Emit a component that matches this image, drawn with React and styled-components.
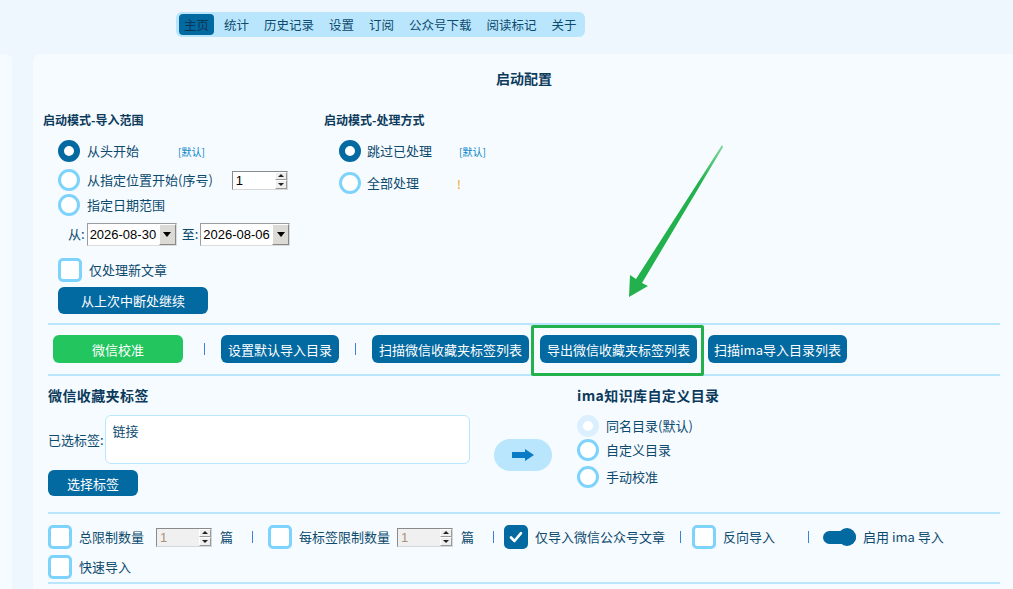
import React from "react";
import styled, { createGlobalStyle, css } from "styled-components";

const colors = {
    page: "#eef6fe",
    panel: "#f6fbff",
    text: "#0c4a6e",
    heading: "#0b3a5c",
    primary: "#0369a1",
    light: "#7dd3fc",
    line: "#bae6fd",
    green: "#22c55e",
    mark: "#22b14c",
    link: "#0284c7",
    sep: "#3b82d6",
};

const GlobalStyle = createGlobalStyle`
    html, body {
        margin: 0;
        padding: 0;
    }
    body {
        background: ${colors.page};
        font-family: "Noto Sans CJK SC", "Noto Sans", sans-serif;
        font-size: 13px;
        color: ${colors.text};
        overflow: hidden;
    }
`;

// shared left offset for items laid out in a row
const spaced = css`
    margin-left: ${(p) => p.$ml || 0}px;
`;

const Header = styled.header`
    height: 54px;
    box-sizing: border-box;
    padding: 12px 0 0 176px;
`;

const NavPill = styled.nav`
    display: inline-flex;
    align-items: center;
    gap: 5px;
    height: 25px;
    box-sizing: border-box;
    padding: 0 3px;
    background: ${colors.line};
    border-radius: 6px;
`;

const NavItem = styled.span`
    height: 21px;
    line-height: 21px;
    padding: 0 5px;
    border-radius: 4px;
    font-size: 12.5px;
    color: ${(p) => (p.$active ? "#0a3552" : colors.text)};
    background: ${(p) => (p.$active ? colors.primary : "transparent")};
`;

const Main = styled.div`
    display: flex;
    gap: 21px;
    min-height: calc(100vh - 54px);
`;

const SideBar = styled.aside`
    width: 12px;
    flex: none;
    background: ${colors.panel};
    border-radius: 0 6px 0 0;
`;

const Panel = styled.section`
    flex: 1;
    position: relative;
    background: ${colors.panel};
    border-radius: 8px 0 0 0;
    padding: 16px 13px 20px 15px;
`;

const Title = styled.h1`
    margin: 0;
    text-align: center;
    font-size: 14px;
    line-height: 17px;
    font-weight: 700;
    color: ${colors.heading};
`;

const ModeGrid = styled.div`
    display: flex;
    margin: 24px 0 0 -5px;
`;

const ModeColumn = styled.div`
    width: ${(p) => p.$w}px;
`;

const Heading = styled.div`
    font-size: ${(p) => p.$size || 12}px;
    line-height: 18px;
    font-weight: 700;
    color: ${colors.heading};
    letter-spacing: ${(p) => (p.$size ? "0.4px" : "0")};
    white-space: nowrap;
`;

const Row = styled.div`
    display: flex;
    align-items: center;
    height: 24px;
    margin-top: ${(p) => p.$mt || 0}px;
    padding-left: ${(p) => p.$indent || 0}px;
`;

const ButtonRow = styled.div`
    display: flex;
    padding: 5px 0 0 15px;
`;

const Radio = styled.span`
    ${spaced};
    flex: none;
    width: 22px;
    height: 22px;
    box-sizing: border-box;
    border-radius: 50%;
    background: #fff;
    border: ${(p) =>
        p.$checked
            ? `6px solid ${colors.primary}`
            : p.$disabled
            ? "6px solid #dcefff"
            : `3px solid ${colors.light}`};
`;

const CheckBox = styled.span`
    ${spaced};
    flex: none;
    width: 24px;
    height: 24px;
    box-sizing: border-box;
    border-radius: 5px;
    border: 3px solid ${(p) => (p.$checked ? colors.primary : colors.light)};
    background: ${(p) => (p.$checked ? colors.primary : "#fff")};
    display: flex;
    align-items: center;
    justify-content: center;
`;

const Label = styled.span`
    ${spaced};
    min-width: ${(p) => p.$w || 0}px;
    line-height: 24px;
    white-space: nowrap;
    color: ${colors.text};
`;

const Tag = styled.span`
    font-size: 10px;
    color: ${colors.link};
`;

const Warn = styled.span`
    font-size: 12px;
    color: #f59e0b;
`;

const SpinBox = styled.div`
    ${spaced};
    display: flex;
    width: 56px;
    height: 19px;
    box-sizing: border-box;
    border: 1px solid #8a8a8a;
    border-right-color: #d6d6d6;
    border-bottom-color: #d6d6d6;
    background: ${(p) => (p.$disabled ? "#f0f0f0" : "#fff")};
`;

const SpinValue = styled.span`
    flex: 1;
    padding-left: 3px;
    font: 13px/17px "Liberation Sans", sans-serif;
    color: ${(p) => (p.$disabled ? "#a8927a" : "#000")};
`;

const SpinArrows = styled.span`
    display: flex;
    flex-direction: column;
    width: 12px;
`;

const SpinBtn = styled.span`
    flex: 1;
    display: flex;
    align-items: center;
    justify-content: center;
    background: #efefef;
    border: 1px solid #fff;
    border-right-color: #9a9a9a;
    border-bottom-color: #9a9a9a;

    &::after {
        content: "";
        border-left: 3px solid transparent;
        border-right: 3px solid transparent;
        ${(p) =>
            p.$down
                ? "border-top: 3px solid #222;"
                : "border-bottom: 3px solid #222;"}
    }
`;

const DateSelect = styled.div`
    ${spaced};
    display: flex;
    width: ${(p) => p.$w}px;
    height: 23px;
    box-sizing: border-box;
    border: 1px solid #9c9c9c;
    border-right-color: #dcdcdc;
    border-bottom-color: #dcdcdc;
    background: #fff;
`;

const DateText = styled.span`
    flex: 1;
    padding-left: 2px;
    font: 13px/21px "Liberation Sans", sans-serif;
    color: #000;
`;

const DropBtn = styled.span`
    width: 15px;
    display: flex;
    align-items: center;
    justify-content: center;
    background: #dcdad5;
    border: 1px solid #fff;
    border-right-color: #888;
    border-bottom-color: #888;

    &::after {
        content: "";
        border-left: 4px solid transparent;
        border-right: 4px solid transparent;
        border-top: 5px solid #000;
    }
`;

const Button = styled.button`
    ${spaced};
    flex: none;
    height: ${(p) => p.$h || 28}px;
    width: ${(p) => (p.$w ? `${p.$w}px` : "auto")};
    padding: 0 ${(p) => p.$pad ?? 7}px;
    margin-top: ${(p) => p.$mt || 0}px;
    border: none;
    border-radius: 6px;
    background: ${(p) => (p.$green ? colors.green : colors.primary)};
    color: #fff;
    font-family: inherit;
    font-size: 13px;
    white-space: nowrap;
    cursor: pointer;
`;

const Divider = styled.div`
    height: 2px;
    background: ${colors.line};
    margin-top: ${(p) => p.$mt || 0}px;
`;

const ToolRow = styled.div`
    display: flex;
    align-items: center;
    padding: 10px 0 11px 5px;
`;

const Sep = styled.span`
    ${spaced};
    flex: none;
    width: 1px;
    height: 12px;
    background: ${colors.sep};
`;

const TagSection = styled.div`
    display: flex;
    padding: 10px 0 16px;
`;

const TagColumn = styled.div`
    width: 422px;
`;

const FieldRow = styled.div`
    display: flex;
    align-items: center;
    gap: 1px;
    margin-top: 11px;
`;

const TagBox = styled.div`
    width: 366px;
    height: 49px;
    box-sizing: border-box;
    background: #fff;
    border: 1px solid ${colors.line};
    border-radius: 6px;
    padding: 6px 7px;
    line-height: 17px;
`;

const ArrowButton = styled.button`
    flex: none;
    align-self: flex-start;
    width: 58px;
    height: 32px;
    margin: 53px 0 0 24px;
    border: none;
    border-radius: 16px;
    background: ${colors.line};
    display: flex;
    align-items: center;
    justify-content: center;
    cursor: pointer;
`;

const DirColumn = styled.div`
    margin-left: 25px;
`;

const OptionsSection = styled.div`
    padding-top: 11px;
`;

const Unit = styled.span`
    ${spaced};
    line-height: 24px;
`;

const Toggle = styled.span`
    ${spaced};
    position: relative;
    flex: none;
    width: 33px;
    height: 13px;
    border-radius: 7px;
    background: ${colors.primary};

    &::after {
        content: "";
        position: absolute;
        right: 0;
        top: -2.5px;
        width: 18px;
        height: 18px;
        border-radius: 50%;
        background: ${colors.primary};
    }
`;

// annotation drawn over the page
const Highlight = styled.div`
    position: absolute;
    left: 498px;
    top: 271px;
    width: 173px;
    height: 51px;
    box-sizing: border-box;
    border: 3px solid ${colors.mark};
    border-radius: 2px;
    pointer-events: none;
`;

const PointerArrow = styled.svg`
    position: absolute;
    left: 587px;
    top: 86px;
    pointer-events: none;
`;

const navItems = ["主页", "统计", "历史记录", "设置", "订阅", "公众号下载", "阅读标记", "关于"];

function Spin({ ml, disabled }) {
    return (
        <SpinBox $ml={ml} $disabled={disabled}>
            <SpinValue $disabled={disabled}>1</SpinValue>
            <SpinArrows>
                <SpinBtn />
                <SpinBtn $down />
            </SpinArrows>
        </SpinBox>
    );
}

function Check({ ml }) {
    return (
        <CheckBox $checked $ml={ml}>
            <svg width="14" height="14" viewBox="0 0 14 14">
                <polyline points="2,7.5 5.5,11 12,3.2" fill="none" stroke="#fff" strokeWidth="2.6" strokeLinecap="round" strokeLinejoin="round" />
            </svg>
        </CheckBox>
    );
}

function App() {
    return (
        <>
            <GlobalStyle />
            <Header>
                <NavPill>
                    {navItems.map((item, i) => (
                        <NavItem key={item} $active={i === 0}>{item}</NavItem>
                    ))}
                </NavPill>
            </Header>
            <Main>
                <SideBar />
                <Panel>
                    <Title>启动配置</Title>

                    <ModeGrid>
                        <ModeColumn $w={281}>
                            <Heading>启动模式-导入范围</Heading>
                            <Row $mt={10} $indent={15}>
                                <Radio $checked />
                                <Label $ml={7} $w={91}>从头开始</Label>
                                <Tag>[默认]</Tag>
                            </Row>
                            <Row $mt={5} $indent={15}>
                                <Radio />
                                <Label $ml={7}>从指定位置开始(序号)</Label>
                                <Spin ml={19} />
                            </Row>
                            <Row $mt={1} $indent={15}>
                                <Radio />
                                <Label $ml={7}>指定日期范围</Label>
                            </Row>
                            <Row $mt={5} $indent={25}>
                                <Label>从:</Label>
                                <DateSelect $ml={2} $w={90}>
                                    <DateText>2026-08-30</DateText>
                                    <DropBtn />
                                </DateSelect>
                                <Label $ml={5}>至:</Label>
                                <DateSelect $ml={2} $w={90}>
                                    <DateText>2026-08-06</DateText>
                                    <DropBtn />
                                </DateSelect>
                            </Row>
                            <Row $mt={12} $indent={15}>
                                <CheckBox />
                                <Label $ml={7}>仅处理新文章</Label>
                            </Row>
                            <ButtonRow>
                                <Button $w={150} $h={27}>从上次中断处继续</Button>
                            </ButtonRow>
                        </ModeColumn>
                        <ModeColumn $w={400}>
                            <Heading>启动模式-处理方式</Heading>
                            <Row $mt={10} $indent={15}>
                                <Radio $checked />
                                <Label $ml={6} $w={92}>跳过已处理</Label>
                                <Tag>[默认]</Tag>
                            </Row>
                            <Row $mt={8} $indent={15}>
                                <Radio />
                                <Label $ml={6} $w={90}>全部处理</Label>
                                <Warn>!</Warn>
                            </Row>
                        </ModeColumn>
                    </ModeGrid>

                    <Divider $mt={9} />
                    <ToolRow>
                        <Button $green $w={130}>微信校准</Button>
                        <Sep $ml={21} />
                        <Button $ml={16}>设置默认导入目录</Button>
                        <Sep $ml={16} />
                        <Button $ml={16}>扫描微信收藏夹标签列表</Button>
                        <Button $ml={11}>导出微信收藏夹标签列表</Button>
                        <Button $ml={11} $pad={6}>扫描ima导入目录列表</Button>
                    </ToolRow>
                    <Divider />

                    <TagSection>
                        <TagColumn>
                            <Heading $size={14}>微信收藏夹标签</Heading>
                            <FieldRow>
                                <Label>已选标签:</Label>
                                <TagBox>链接</TagBox>
                            </FieldRow>
                            <Button $w={90} $h={26} $mt={6}>选择标签</Button>
                        </TagColumn>
                        <ArrowButton aria-label="apply">
                            <svg width="22" height="12" viewBox="0 0 22 12">
                                <polygon points="0,3 13,3 13,0 22,6 13,12 13,9 0,9" fill="#0a7cc4" />
                            </svg>
                        </ArrowButton>
                        <DirColumn>
                            <Heading $size={14}>ima知识库自定义目录</Heading>
                            <Row $mt={10}>
                                <Radio $disabled />
                                <Label $ml={7}>同名目录(默认)</Label>
                            </Row>
                            <Row>
                                <Radio />
                                <Label $ml={7}>自定义目录</Label>
                            </Row>
                            <Row $mt={3}>
                                <Radio />
                                <Label $ml={7}>手动校准</Label>
                            </Row>
                        </DirColumn>
                    </TagSection>
                    <Divider />

                    <OptionsSection>
                        <Row>
                            <CheckBox />
                            <Label $ml={7}>总限制数量</Label>
                            <Spin ml={12} disabled />
                            <Unit $ml={8}>篇</Unit>
                            <Sep $ml={19} />
                            <CheckBox $ml={15} />
                            <Label $ml={7}>每标签限制数量</Label>
                            <Spin ml={7} disabled />
                            <Unit $ml={8}>篇</Unit>
                            <Sep $ml={19} />
                            <Check ml={10} />
                            <Label $ml={7}>仅导入微信公众号文章</Label>
                            <Sep $ml={15} />
                            <CheckBox $ml={11} />
                            <Label $ml={7} $w={85}>反向导入</Label>
                            <Sep />
                            <Toggle $ml={14} />
                            <Label $ml={7}>启用 ima 导入</Label>
                        </Row>
                        <Row $mt={6}>
                            <CheckBox />
                            <Label $ml={7}>快速导入</Label>
                        </Row>
                    </OptionsSection>
                    <Divider $mt={3} />

                    <Highlight />
                    <PointerArrow width="110" height="165" viewBox="0 0 110 165">
                        <defs>
                            <linearGradient id="arrowFade" x1="102" y1="5" x2="10" y2="157" gradientUnits="userSpaceOnUse">
                                <stop offset="0" stopColor="#7fd69a" />
                                <stop offset="0.25" stopColor="#22b14c" />
                                <stop offset="1" stopColor="#22b14c" />
                            </linearGradient>
                        </defs>
                        <polygon points="102,5 103,7 22,143 28,146 9,157 10,135 16,139" fill="url(#arrowFade)" />
                    </PointerArrow>
                </Panel>
            </Main>
        </>
    );
}

export default App;
